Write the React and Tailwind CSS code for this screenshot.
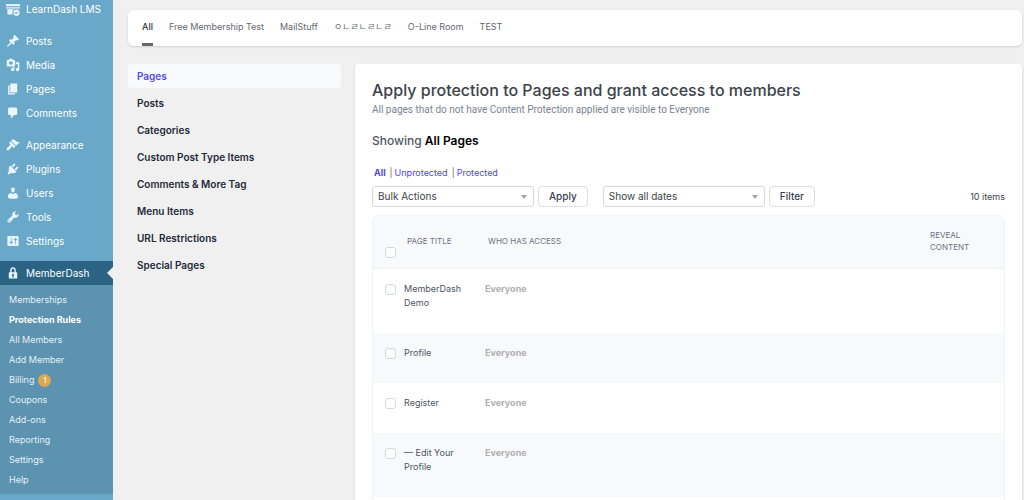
import React, { useState } from "react";

const icons = {
  learndash: (
    <>
      <path d="M0 3h20v3H0z" />
      <path d="M0 7.300h20v2.200H0z" opacity=".75" />
      <path d="M2 10.500h9.800a5.400 5.400 0 0 0-2 7.500H2z" />
      <path d="M15 10.800a4.400 4.400 0 1 0 0 8.800 4.400 4.400 0 0 0 0-8.800zm-.6 6.800l-2.200-2.200 1-1 1.200 1.200 2.500-2.500 1 1z" />
    </>
  ),
  posts: (
    <path d="M10.44 3.02l1.82-1.82 6.36 6.35-1.83 1.82c-1.05-.68-2.48-.57-3.41.36l-.75.75c-.92.93-1.04 2.35-.35 3.41l-1.83 1.82-2.41-2.41-2.8 2.79c-.42.42-3.38 2.71-3.8 2.29s1.86-3.39 2.28-3.81l2.79-2.79L4.1 9.36l1.83-1.82c1.05.69 2.48.57 3.4-.36l.75-.75c.93-.92 1.05-2.35.36-3.41z" />
  ),
  media: (
    <path d="M13 11V4c0-.55-.45-1-1-1h-1.67L9 1H5L3.67 3H2c-.55 0-1 .45-1 1v7c0 .55.45 1 1 1h10c.55 0 1-.45 1-1zM7 4.5c1.38 0 2.5 1.12 2.5 2.5S8.38 9.5 7 9.5 4.5 8.38 4.5 7 5.62 4.5 7 4.5zM14 6h5v10.5c0 1.38-1.12 2.5-2.5 2.5S14 17.88 14 16.5s1.12-2.5 2.5-2.5c.17 0 .34.02.5.05V9h-3V6zm-4 8.05V13h2v3.5c0 1.38-1.12 2.5-2.5 2.5S7 17.88 7 16.5 8.12 14 9.5 14c.17 0 .34.02.5.05z" />
  ),
  pages: <path d="M6 15V2h10v13H6zm-1 1h8v2H3V5h2v11z" />,
  comments: (
    <path d="M5 2h9c1.1 0 2 .9 2 2v7c0 1.1-.9 2-2 2h-2l-5 5v-5H5c-1.1 0-2-.9-2-2V4c0-1.1.9-2 2-2z" />
  ),
  appearance: (
    <path d="M14.48 11.06L7.41 3.99l1.5-1.5c.5-.56 2.3-.47 3.51.32 1.21.8 1.43 1.28 2.91 2.1 1.18.64 2.45 1.26 4.45.85zm-.71.71L6.7 4.7 4.93 6.47c-.39.39-.39 1.02 0 1.41l1.06 1.06c.39.39.39 1.03 0 1.42-.6.6-1.43 1.11-2.21 1.69-.35.26-.7.53-1.01.84C1.43 14.23.4 16.08 1.4 17.07c.99 1 2.84-.03 4.18-1.36.31-.31.58-.66.85-1.02.57-.78 1.08-1.61 1.69-2.21.39-.39 1.02-.39 1.41 0l1.06 1.06c.39.39 1.02.39 1.41 0z" />
  ),
  plugins: (
    <path d="M13.11 4.36L9.87 7.6 8 5.73l3.24-3.24c.35-.34 1.05-.2 1.56.32.52.51.66 1.21.31 1.55zm-8 1.77l.91-1.12 9.01 9.01-1.19.84c-.71.71-2.63 1.16-3.82 1.16H6.14L4.9 17.26c-.59.59-1.54.59-2.12 0-.59-.58-.59-1.53 0-2.12l1.24-1.24v-3.88c0-1.13.4-3.19 1.09-3.89zm7.26 3.97l3.24-3.24c.34-.35 1.04-.21 1.55.31.52.51.66 1.21.31 1.55l-3.24 3.25z" />
  ),
  users: (
    <path d="M10 9.25c-2.27 0-2.73-3.44-2.73-3.44C7 4.02 7.82 2 9.97 2c2.16 0 2.98 2.02 2.71 3.81 0 0-.41 3.44-2.68 3.44zm0 2.57L12.72 10c2.39 0 4.52 2.33 4.52 4.53v2.49s-3.65 1.13-7.24 1.13c-3.65 0-7.24-1.13-7.24-1.13v-2.49c0-2.25 1.94-4.48 4.47-4.48z" />
  ),
  tools: (
    <path d="M16.68 9.77c-1.34 1.34-3.3 1.67-4.95.99l-5.41 6.52c-.99.99-2.59.99-3.58 0s-.99-2.59 0-3.57l6.52-5.42c-.68-1.65-.35-3.61.99-4.95 1.28-1.28 3.12-1.62 4.72-1.06l-2.89 2.89 2.82 2.82 2.86-2.87c.53 1.58.18 3.39-1.08 4.65zM3.81 16.21c.4.39 1.04.39 1.43 0 .4-.4.4-1.04 0-1.43-.39-.4-1.03-.4-1.43 0-.39.39-.39 1.03 0 1.43z" />
  ),
  settings: (
    <path
      fillRule="evenodd"
      d="M18 16V4c0-.55-.45-1-1-1H3c-.55 0-1 .45-1 1v12c0 .55.45 1 1 1h14c.55 0 1-.45 1-1zM8 11h1c.55 0 1 .45 1 1s-.45 1-1 1H8v1.5c0 .28-.22.5-.5.5s-.5-.22-.5-.5V13H6c-.55 0-1-.45-1-1s.45-1 1-1h1V5.5c0-.28.22-.5.5-.5s.5.22.5.5V11zm5-2h-1c-.55 0-1-.45-1-1s.45-1 1-1h1V5.5c0-.28.22-.5.5-.5s.5.22.5.5V7h1c.55 0 1 .45 1 1s-.45 1-1 1h-1v5.500c0 .28-.22.5-.5.5s-.5-.22-.5-.5V9z"
    />
  ),
  lock: (
    <path
      fillRule="evenodd"
      d="M14 9V6c0-2.400-1.800-4.200-4-4.200S6 3.600 6 6v3H5c-.55 0-1 .45-1 1v7c0 .55.45 1 1 1h10c.55 0 1-.45 1-1v-7c0-.55-.45-1-1-1zM8 6c0-1.300.9-2.200 2-2.200s2 .9 2 2.200v3H8zm2.700 8.200l.4 2.300H8.900l.4-2.300a1.500 1.500 0 1 1 1.400 0z"
    />
  ),
};

const menuGroups = [
  [
    { icon: "posts", label: "Posts" },
    { icon: "media", label: "Media" },
    { icon: "pages", label: "Pages" },
    { icon: "comments", label: "Comments" },
  ],
  [
    { icon: "appearance", label: "Appearance" },
    { icon: "plugins", label: "Plugins" },
    { icon: "users", label: "Users" },
    { icon: "tools", label: "Tools" },
    { icon: "settings", label: "Settings" },
  ],
];

const submenu = [
  "Memberships",
  "Protection Rules",
  "All Members",
  "Add Member",
  "Billing",
  "Coupons",
  "Add-ons",
  "Reporting",
  "Settings",
  "Help",
];

const tabs = [
  "All",
  "Free Membership Test",
  "MailStuff",
  "ㅇㄴㄹㄴㄹㄴㄹ",
  "O-Line Room",
  "TEST",
];

const ruleTypes = [
  "Pages",
  "Posts",
  "Categories",
  "Custom Post Type Items",
  "Comments & More Tag",
  "Menu Items",
  "URL Restrictions",
  "Special Pages",
];

const pages = [
  { id: 1, title: "MemberDash Demo", access: "Everyone" },
  { id: 2, title: "Profile", access: "Everyone" },
  { id: 3, title: "Register", access: "Everyone" },
  { id: 4, title: "— Edit Your Profile", access: "Everyone" },
];

const MenuIcon = ({ name }) => (
  <svg
    viewBox="0 0 20 20"
    className="size-[14px] shrink-0 fill-[#eaf6fd]"
    aria-hidden="true"
  >
    {icons[name]}
  </svg>
);

const MenuItem = ({ icon, label }) => (
  <a
    href="#"
    className="flex h-6 items-center gap-[6px] pl-[6px] text-[10px] text-white"
  >
    <MenuIcon name={icon} />
    {label}
  </a>
);

const Sidebar = () => (
  <nav className="w-[113px] shrink-0 bg-[#69a8c8]">
    <a
      href="#"
      className="flex h-[21px] items-center gap-[6px] pb-[3px] pl-[6px] text-[10px] whitespace-nowrap text-white"
    >
      <MenuIcon name="learndash" />
      LearnDash LMS
    </a>
    {menuGroups.map((group, index) => (
      <div key={index} className="mt-2">
        {group.map((item) => (
          <MenuItem key={item.label} {...item} />
        ))}
      </div>
    ))}
    <div className="relative mt-2 bg-[#2a6384]">
      <MenuItem icon="lock" label="MemberDash" />
      <svg
        viewBox="0 0 6 12"
        className="absolute top-[6px] right-0 h-3 w-[6px] fill-[#f0f0f0]"
        aria-hidden="true"
      >
        <path d="M6 0v12L0 6z" />
      </svg>
    </div>
    <ul className="bg-[#5c93b0] pt-[5px] pb-1 text-[9px]">
      {submenu.map((label) => (
        <li key={label} className="flex h-5 items-center gap-1 pl-[9px]">
          <a
            href="#"
            className={
              label === "Protection Rules"
                ? "font-bold text-white"
                : "text-[#e6f0f6]"
            }
          >
            {label}
          </a>
          {label === "Billing" && (
            <span className="flex size-[13px] items-center justify-center rounded-full bg-[#dbaa50] text-[8px] text-white">
              1
            </span>
          )}
        </li>
      ))}
    </ul>
  </nav>
);

const Select = ({ label, options }) => (
  <div className="relative w-[162px]">
    <select
      aria-label={label}
      className="block h-[21px] w-full appearance-none rounded-[3px] border border-[#d5d7db] bg-white pl-[5px] text-[10px] text-[#3c434a]"
    >
      {options.map((option) => (
        <option key={option}>{option}</option>
      ))}
    </select>
    <svg
      viewBox="0 0 6 4"
      className="pointer-events-none absolute top-[9px] right-[7px] h-1 w-[6px] fill-[#a3a3a3]"
      aria-hidden="true"
    >
      <path d="M0 0h6L3 4z" />
    </svg>
  </div>
);

const Button = ({ children }) => (
  <button
    type="button"
    className="h-[21px] rounded-[4px] border border-[#dcdee4] bg-white px-[10px] text-[10px] font-medium text-[#374151]"
  >
    {children}
  </button>
);

const Checkbox = ({ label, checked, onChange }) => (
  <input
    type="checkbox"
    aria-label={label}
    checked={checked}
    onChange={onChange}
    className="block size-[11px] appearance-none rounded-[3px] border border-[#d5d8de] bg-white checked:bg-[#4f3ff0]"
  />
);

const PagesTable = () => {
  const [selected, setSelected] = useState([]);
  const allSelected = selected.length === pages.length;

  const toggle = (id) => {
    setSelected(
      selected.includes(id)
        ? selected.filter((item) => item !== id)
        : [...selected, id]
    );
  };

  return (
    <div className="mt-[7px] flex-1 overflow-hidden rounded-t-lg border-x border-[#f1f3f6]">
      <table className="w-full table-fixed text-left text-[9px]">
        <thead className="bg-[#f8f9fb] text-[8px] leading-3 text-[#6b7280] uppercase">
          <tr className="h-[54px] border-b border-[#eff1f4]">
            <th className="w-[31px] pt-6 pl-3">
              <Checkbox
                label="Select all"
                checked={allSelected}
                onChange={() =>
                  setSelected(allSelected ? [] : pages.map((page) => page.id))
                }
              />
            </th>
            <th className="w-[81px] pl-[3px] font-normal">Page title</th>
            <th className="pl-[3px] font-normal">Who has access</th>
            <th className="w-[77px] pl-[3px] font-normal">
              Reveal
              <br />
              content
            </th>
          </tr>
        </thead>
        <tbody className="align-top leading-[14px] text-[#4b5563]">
          {pages.map((page) => (
            <tr key={page.id} className="even:bg-[#f8f9fb]">
              <td className="pt-[15px] pl-3">
                <Checkbox
                  label={"Select " + page.title}
                  checked={selected.includes(page.id)}
                  onChange={() => toggle(page.id)}
                />
              </td>
              <td className="pt-[13px] pr-5 pb-[23px]">{page.title}</td>
              <td className="pt-[13px] pb-[23px] font-bold text-[#b0b0b0]">
                {page.access}
              </td>
              <td></td>
            </tr>
          ))}
        </tbody>
      </table>
    </div>
  );
};

const App = () => {
  const [activeTab, setActiveTab] = useState("All");
  const [activeRule, setActiveRule] = useState("Pages");

  return (
    <div className="flex min-h-screen bg-[#f0f0f0] font-['Inter','Noto_Sans_CJK_KR',sans-serif]">
      <Sidebar />
      <main className="flex min-w-0 flex-1 flex-col pt-[10px] pr-[2px] pl-[15px]">
        <div className="flex h-9 gap-4 rounded-md bg-white px-[14px] text-[9px] shadow-sm">
          {tabs.map((tab) => (
            <button
              key={tab}
              type="button"
              onClick={() => setActiveTab(tab)}
              className={
                tab === activeTab
                  ? "border-b-3 border-[#646970] font-medium text-[#2c3338]"
                  : "border-b-3 border-transparent text-[#646970]"
              }
            >
              {tab}
            </button>
          ))}
        </div>
        <div className="mt-[18px] flex flex-1 gap-[14px]">
          <div className="flex w-[213px] shrink-0 flex-col gap-[3px] text-[10px] font-semibold">
            {ruleTypes.map((rule) => (
              <button
                key={rule}
                type="button"
                onClick={() => setActiveRule(rule)}
                className={
                  rule === activeRule
                    ? "h-6 rounded-[4px] bg-[#f9fafc] px-[9px] text-left text-[#5548ee]"
                    : "h-6 rounded-[4px] px-[9px] text-left text-[#1f2937]"
                }
              >
                {rule}
              </button>
            ))}
          </div>
          <section className="flex min-w-0 flex-1 flex-col rounded-t-[4px] bg-white px-[17px] pt-[14px] shadow-sm">
            <h1 className="text-[16px] leading-6 font-medium text-[#3c434a]">
              Apply protection to Pages and grant access to members
            </h1>
            <p className="font-['Roboto',sans-serif] text-[10px] leading-4 text-[#7b8390]">
              All pages that do not have Content Protection applied are visible
              to Everyone
            </p>
            <h2 className="mt-[13px] text-[12px] leading-5 font-medium text-[#50575e]">
              Showing <span className="font-semibold text-black">All Pages</span>
            </h2>
            <div className="mt-[14px] flex gap-1 pl-[2px] text-[9px] leading-4 text-[#646970]">
              <a href="#" className="font-bold text-[#4f3ff0]">
                All
              </a>
              <span className="flex gap-[2px]">
                |
                <a href="#" className="text-[#4f3ff0]">
                  Unprotected
                </a>
              </span>
              <span className="flex gap-[2px]">
                |
                <a href="#" className="text-[#4f3ff0]">
                  Protected
                </a>
              </span>
            </div>
            <div className="mt-[5px] flex items-center gap-[15px]">
              <div className="flex gap-1">
                <Select
                  label="Bulk actions"
                  options={["Bulk Actions", "Edit"]}
                />
                <Button>Apply</Button>
              </div>
              <div className="flex gap-1">
                <Select label="Filter by date" options={["Show all dates"]} />
                <Button>Filter</Button>
              </div>
              <span className="ml-auto text-[9px] leading-4 text-[#3c434a]">
                10 items
              </span>
            </div>
            <PagesTable />
          </section>
        </div>
      </main>
    </div>
  );
};

export default App;
